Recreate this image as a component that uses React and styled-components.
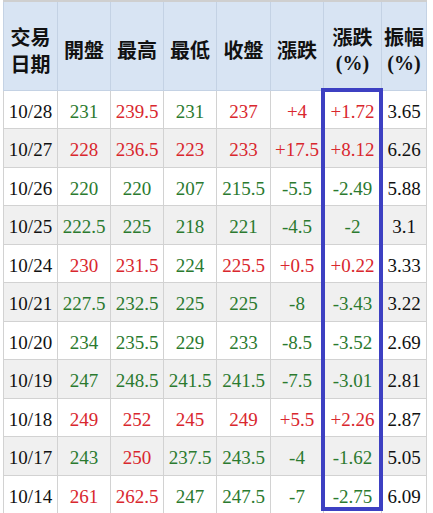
import styled, { createGlobalStyle } from "styled-components"

//DATA
const rows = [
  ["10/28", ["231", "g"], ["239.5", "r"], ["231", "g"], ["237", "r"], ["+4", "r"], ["+1.72", "r"], "3.65"],
  ["10/27", ["228", "r"], ["236.5", "r"], ["223", "r"], ["233", "r"], ["+17.5", "r"], ["+8.12", "r"], "6.26"],
  ["10/26", ["220", "g"], ["220", "g"], ["207", "g"], ["215.5", "g"], ["-5.5", "g"], ["-2.49", "g"], "5.88"],
  ["10/25", ["222.5", "g"], ["225", "g"], ["218", "g"], ["221", "g"], ["-4.5", "g"], ["-2", "g"], "3.1"],
  ["10/24", ["230", "r"], ["231.5", "r"], ["224", "g"], ["225.5", "r"], ["+0.5", "r"], ["+0.22", "r"], "3.33"],
  ["10/21", ["227.5", "g"], ["232.5", "g"], ["225", "g"], ["225", "g"], ["-8", "g"], ["-3.43", "g"], "3.22"],
  ["10/20", ["234", "g"], ["235.5", "g"], ["229", "g"], ["233", "g"], ["-8.5", "g"], ["-3.52", "g"], "2.69"],
  ["10/19", ["247", "g"], ["248.5", "g"], ["241.5", "g"], ["241.5", "g"], ["-7.5", "g"], ["-3.01", "g"], "2.81"],
  ["10/18", ["249", "r"], ["252", "r"], ["245", "r"], ["249", "r"], ["+5.5", "r"], ["+2.26", "r"], "2.87"],
  ["10/17", ["243", "g"], ["250", "r"], ["237.5", "g"], ["243.5", "g"], ["-4", "g"], ["-1.62", "g"], "5.05"],
  ["10/14", ["261", "r"], ["262.5", "r"], ["247", "g"], ["247.5", "g"], ["-7", "g"], ["-2.75", "g"], "6.09"],
]

//HEADER LINES (second flag: latin line)
const headers = [
  [["交易", false], ["日期", false]],
  [["開盤", false]],
  [["最高", false]],
  [["最低", false]],
  [["收盤", false]],
  [["漲跌", false]],
  [["漲跌", false], ["(%)", true]],
  [["振幅", false], ["(%)", true]],
]

const widths = [54, 53, 53, 53, 54, 53, 58, 45]

export default function App() {

  return (

    <>
      <GlobalStyle />

      <Wrapper>

        <Table>

          <colgroup>
            {widths.map((w, i) => <col key={i} style={{ width: w }} />)}
          </colgroup>

          <thead>
            <tr>
              {headers.map((lines, i) => (
                <Th key={i}>
                  {lines.map(([text, latin], j) => <HeadLine key={j} $latin={latin}>{text}</HeadLine>)}
                </Th>
              ))}
            </tr>
          </thead>

          <tbody>
            {rows.map((row, idx) => (
              <Row key={row[0]} $striped={idx % 2 === 1}>
                <Td>{row[0]}</Td>
                {row.slice(1, 7).map(([value, tone], i) => (
                  <Td key={i} $tone={tone}>{value}</Td>
                ))}
                <Td>{row[7]}</Td>
              </Row>
            ))}
          </tbody>

        </Table>

        <Highlight />

      </Wrapper>

    </>

  )

}

//STYLES

const GlobalStyle = createGlobalStyle`
  html, body {
    margin: 0;
    padding: 0;
    background: #ffffff;
  }
`

const Wrapper = styled.div`
  position: relative;
  width: 433px;
  height: 513px;
  overflow: hidden;
  padding-left: 3px;
  box-sizing: border-box;
`

const Table = styled.table`
  border-collapse: collapse;
  table-layout: fixed;
  width: 423px;
  border-top: 2px solid #cfcfcf;
`

const Th = styled.th`
  height: 89px;
  padding: 8px 0 0;
  box-sizing: border-box;
  background: #d8e4f3;
  border: 1px solid #c4d2e4;
  color: #111;
  font-size: 20px;
  text-align: center;
  vertical-align: middle;
`

const HeadLine = styled.div`
  line-height: 27px;
  font-family: ${p => (p.$latin ? `"Liberation Serif", serif` : `"Noto Sans CJK TC", sans-serif`)};
  font-weight: 700;
`

const Row = styled.tr`
  height: 38.5px;
  background: ${p => (p.$striped ? "#f0f0f0" : "#ffffff")};
`

const Td = styled.td`
  padding: 5px 0 0;
  border: 1px solid #d2d2d2;
  font-family: "Liberation Serif", serif;
  font-size: 19px;
  text-align: center;
  vertical-align: middle;
  white-space: nowrap;
  color: ${p => (p.$tone === "r" ? "#d9272e" : p.$tone === "g" ? "#2b7a2f" : "#111")};
`

const Highlight = styled.div`
  position: absolute;
  left: 321px;
  top: 88px;
  width: 62px;
  height: 423px;
  box-sizing: border-box;
  border: 4px solid #3d40c2;
  pointer-events: none;
`
